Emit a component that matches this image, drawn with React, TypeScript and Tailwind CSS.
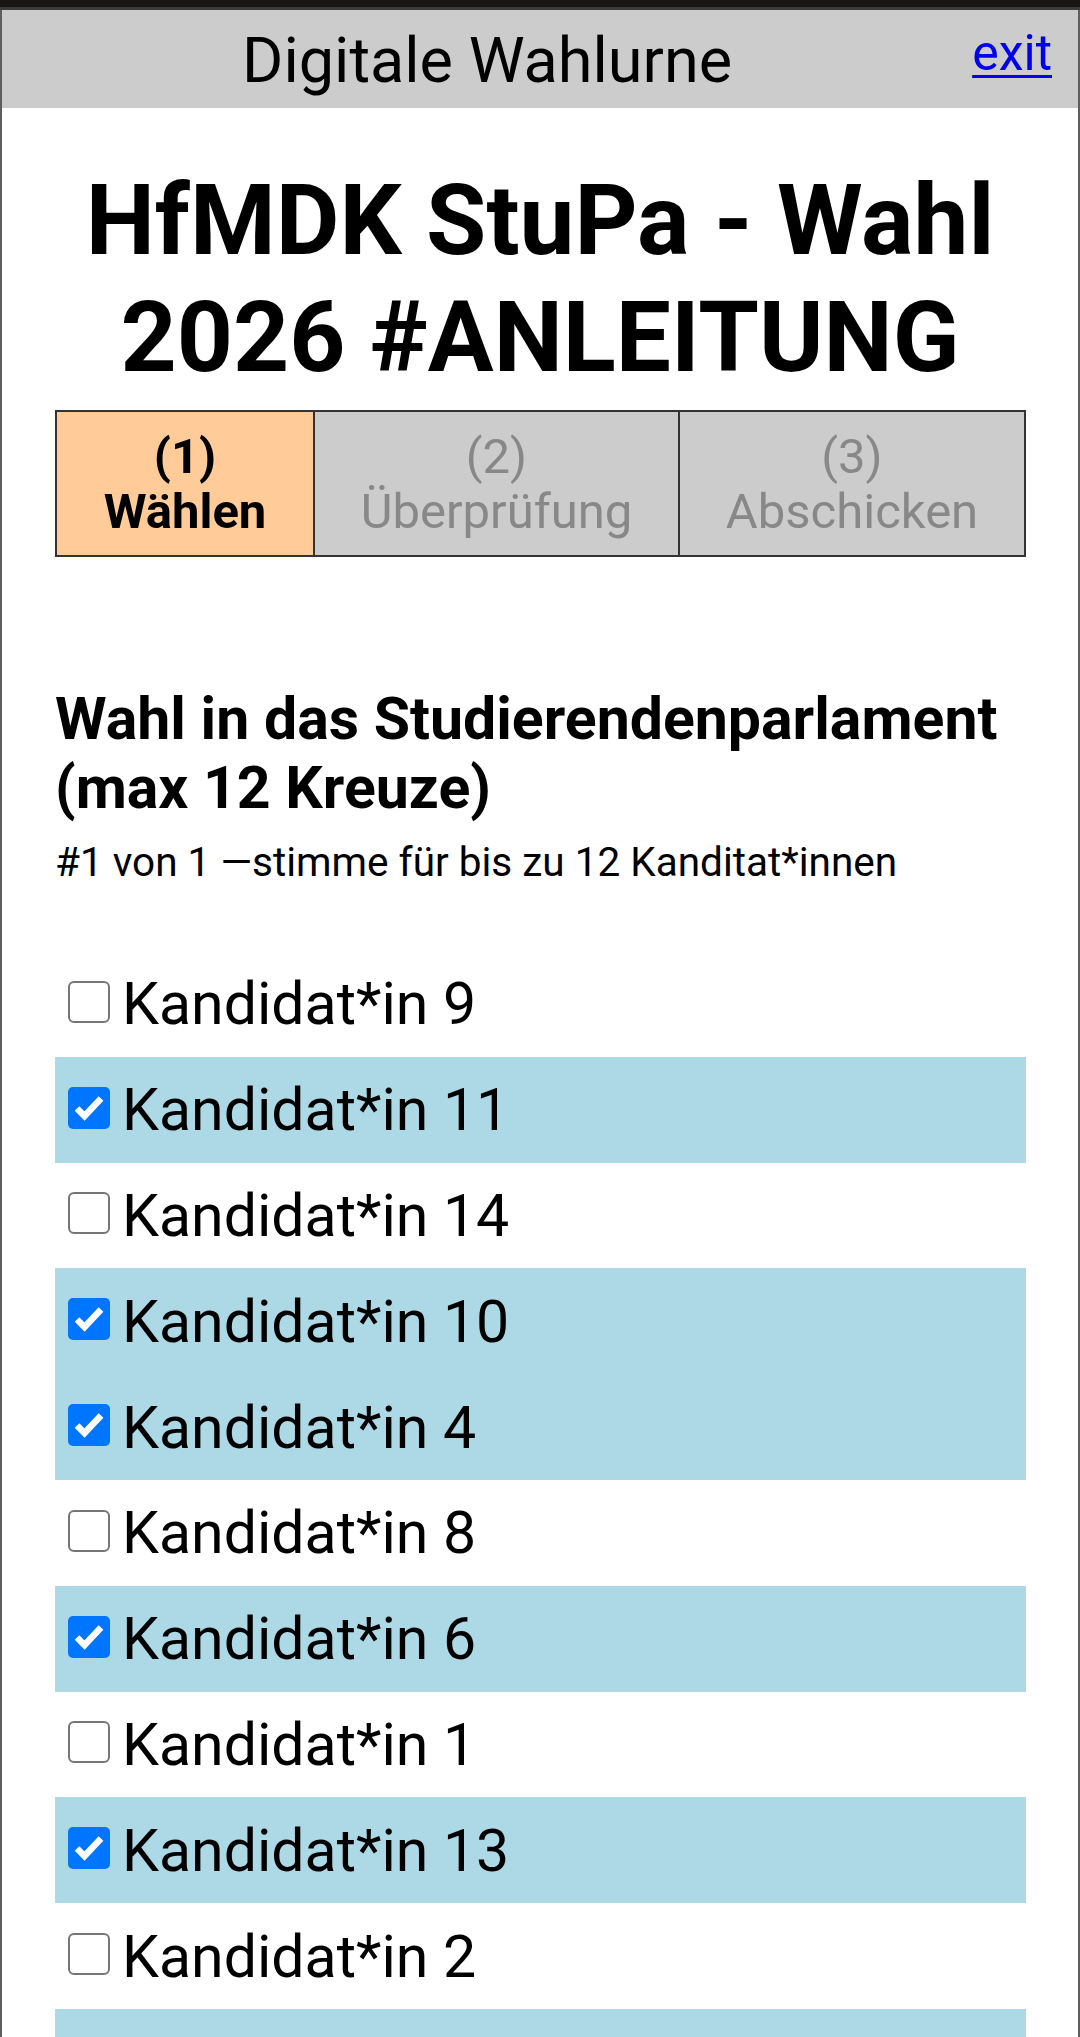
import React from "react";

type Cand = { name: string; checked: boolean };

const candidates: Cand[] = [
  { name: "Kandidat*in 9", checked: false },
  { name: "Kandidat*in 11", checked: true },
  { name: "Kandidat*in 14", checked: false },
  { name: "Kandidat*in 10", checked: true },
  { name: "Kandidat*in 4", checked: true },
  { name: "Kandidat*in 8", checked: false },
  { name: "Kandidat*in 6", checked: true },
  { name: "Kandidat*in 1", checked: false },
  { name: "Kandidat*in 13", checked: true },
  { name: "Kandidat*in 2", checked: false },
  { name: "Kandidat*in 12", checked: true },
  { name: "Kandidat*in 3", checked: false },
  { name: "Kandidat*in 5", checked: false },
  { name: "Kandidat*in 7", checked: false },
];

function Box({ checked }: { checked: boolean }) {
  if (checked) {
    return (
      <div className="w-[42px] h-[42px] shrink-0 rounded-[5px] bg-[#0075ff] flex items-center justify-center mt-[-4px]">
        <svg width="42" height="42" viewBox="0 0 42 42">
          <path d="M9 21.5 L16.5 29 L33 11.5" fill="none" stroke="#ffffff" strokeWidth="6.5" strokeLinecap="butt" strokeLinejoin="miter" />
        </svg>
      </div>
    );
  }
  return (
    <div className="w-[42px] h-[42px] shrink-0 rounded-[6px] border-[2.5px] border-[#767676] bg-white mt-[-4px]" />
  );
}

export default function App() {
  return (
    <div className="w-[1080px] h-[2037px] overflow-hidden bg-white font-['Roboto',sans-serif] text-black">
      <div className="h-[7px] bg-[#191512]" />
      <div className="h-[3px] bg-[#3d3b3a]" />
      <div className="border-x-2 border-[#5e5e5e] min-h-[2027px]">
        <header className="h-[98px] bg-[#cccccc] flex items-start">
          <div className="flex-1 text-center text-[63px] leading-normal mt-[4px]">Digitale Wahlurne</div>
          <a href="#" className="text-[50px] leading-normal mt-[6px] mr-[26px] text-[#0000ee] underline decoration-[3px] underline-offset-[5px]">exit</a>
        </header>

        <h1 className="mt-[54px] text-center font-bold text-[98px] leading-[117px]">
          HfMDK StuPa - Wahl
          <br />
          2026 #ANLEITUNG
        </h1>

        <div className="pl-[53px] pr-[52px]">
          <div className="mt-[14px] flex h-[147px] border-2 border-[#333333]">
            <div className="w-[256px] bg-[#ffcc99] flex flex-col items-center justify-center text-[49px] leading-[55px] font-bold">
              <span>(1)</span>
              <span>Wählen</span>
            </div>
            <div className="w-[365px] border-l-2 border-[#333333] bg-[#cccccc] flex flex-col items-center justify-center text-[49px] leading-[55px] text-[#888888]">
              <span>(2)</span>
              <span>Überprüfung</span>
            </div>
            <div className="flex-1 border-l-2 border-[#333333] bg-[#cccccc] flex flex-col items-center justify-center text-[49px] leading-[55px] text-[#888888]">
              <span>(3)</span>
              <span>Abschicken</span>
            </div>
          </div>

          <h2 className="mt-[127px] font-bold text-[59px] leading-[69px] whitespace-nowrap">
            Wahl in das Studierendenparlament
            <br />
            (max 12 Kreuze)
          </h2>
          <p className="mt-[17px] text-[40.5px] leading-[47px] whitespace-nowrap">#1 von 1 —stimme für bis zu 12 Kanditat*innen</p>

          <div className="mt-[65px] flex flex-col">
            {candidates.map((c) => (
              <label
                key={c.name}
                className={
                  "h-[105.8px] shrink-0 flex items-center pl-[13px] " + (c.checked ? "bg-[#add8e6]" : "bg-white")
                }
              >
                <Box checked={c.checked} />
                <span className="ml-[12px] text-[59px] leading-[69px]">{c.name}</span>
              </label>
            ))}
          </div>
        </div>
      </div>
    </div>
  );
}
